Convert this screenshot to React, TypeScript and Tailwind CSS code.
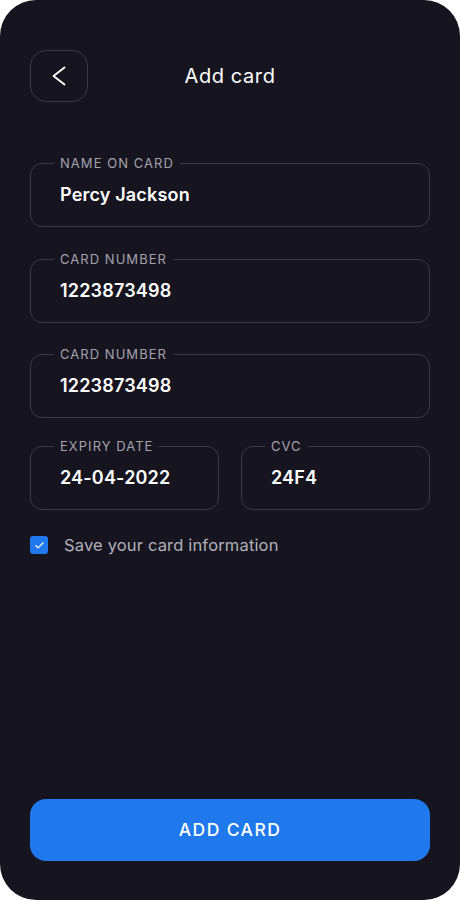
import { Check } from "lucide-react";

const font = { fontFamily: '"Inter", "Open Sans", sans-serif' };

function Field({ label, value, className = "" }: { label: string; value: string; className?: string }) {
  return (
    <fieldset className={`rounded-[12px] border border-[#3a3946] pl-[23px] pr-4 ${className}`}>
      <legend className="px-[6px] text-[13px] leading-[16px] tracking-[0.08em] text-[#a3a2ad]">
        {label}
      </legend>
      <div className="pl-[6px] pt-3 pb-[19px] text-[18px] leading-6 font-semibold tracking-[0.01em] text-white">
        {value}
      </div>
    </fieldset>
  );
}

export default function App() {
  return (
    <div className="w-[460px] h-[900px] bg-white" style={font}>
      <div className="h-full rounded-[36px] bg-[#16151f] px-[30px] pt-[50px] pb-[39px] flex flex-col">
        {/* Header */}
        <div className="relative flex items-center h-[52px]">
          <button className="w-[58px] h-[52px] rounded-[16px] border border-[#3a3946] flex items-center justify-center text-white">
            <svg width="14" height="20" viewBox="0 0 14 20" fill="none" stroke="currentColor" strokeWidth="1.8" strokeLinecap="round" strokeLinejoin="round">
              <polyline points="12.5,1.5 1.5,10 12.5,18.5" />
            </svg>
          </button>
          <h1 className="absolute left-0 right-0 top-[13px] text-center text-[20px] leading-[26px] tracking-[0.03em] text-white pointer-events-none">
            Add card
          </h1>
        </div>

        {/* Form */}
        <div className="mt-[53px] flex flex-col">
          <Field label="NAME ON CARD" value="Percy Jackson" />
          <Field label="CARD NUMBER" value="1223873498" className="mt-6" />
          <Field label="CARD NUMBER" value="1223873498" className="mt-[23px]" />
          <div className="flex gap-[22px] mt-5">
            <Field label="EXPIRY DATE" value="24-04-2022" className="flex-1" />
            <Field label="CVC" value="24F4" className="flex-1" />
          </div>
        </div>

        <label className="mt-[23px] flex items-center gap-4">
          <span className="w-[18px] h-[18px] rounded-[3px] bg-[#2079ec] flex items-center justify-center text-white">
            <Check size={11} strokeWidth={2.5} />
          </span>
          <span className="text-[16.5px] tracking-[0.01em] text-[#b1b0ba]">Save your card information</span>
        </label>

        <button className="mt-auto h-[62px] rounded-[16px] bg-[#2079ec] text-white text-[17.5px] font-medium tracking-[0.08em]">
          ADD CARD
        </button>
      </div>
    </div>
  );
}
